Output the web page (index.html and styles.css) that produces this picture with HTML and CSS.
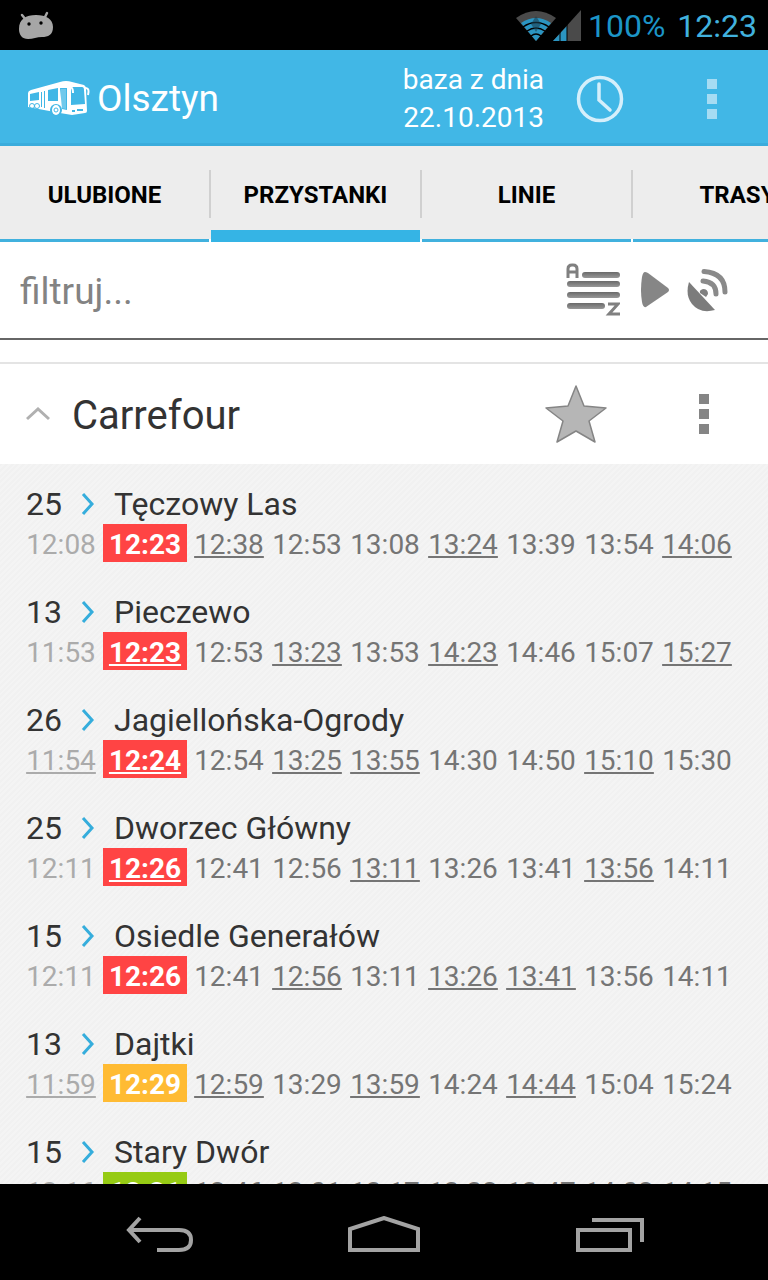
FILE: index.html
```
<!DOCTYPE html>
<html lang="pl">
<head>
    <meta charset="UTF-8">
    <meta name="viewport" content="width=device-width, initial-scale=1.0">
    <title>Olsztyn</title>
    <link rel="stylesheet" href="styles.css">
</head>
<body>
    <div class="status-bar">
        <svg class="droid" width="36" height="30" viewBox="0 0 36 30">
            <path d="M4 4l4 5M29 2l-3 6" stroke="#a6a6a6" stroke-width="2.500" stroke-linecap="round"/>
            <path d="M1 18C1 8 8 4 18 4s17 4 17 12c0 8-5 10-11 10-5 0-9 2-14 2-6 0-9-4-9-10z" fill="#a6a6a6"/>
            <circle cx="11" cy="13" r="1.700" fill="#000"/>
            <circle cx="23" cy="12" r="1.700" fill="#000"/>
        </svg>
        <div class="signals">
            <svg width="66" height="34" viewBox="0 0 66 34">
                <path d="M0 9Q20-5 40 9L20 32z" fill="#4a4a4a"/>
                <path d="M5 14Q20 4 35 14L20 32z" fill="#2b95c2"/>
                <path d="M7 18Q20 9 33 18M11 22Q20 16 29 22M15 27Q20 23 25 27" fill="none" stroke="#000" stroke-width="1.500"/>
                <path d="M15 15l5-8 5 8-5 8z" fill="#1b3f50" opacity=".6"/>
                <path d="M37 32L65 1v31z" fill="#4a4a4a"/>
                <path d="M37 32L51 17v15z" fill="#2b95c2"/>
                <path d="M44 20v12M51 13v19" stroke="#000" stroke-width="1"/>
            </svg>
            <span class="battery">100%</span>
            <span class="clock">12:23</span>
        </div>
    </div>

    <header class="app-bar">
        <svg class="bus" width="62" height="36" viewBox="0 0 62 36">
            <path d="M0 12Q0 10 3 9L32 1Q38-1 44 1l12 3q2 1 2 4l1 22q0 2-2 2l-13 2-12-2L0 26z" fill="#fff"/>
            <g fill="#41b7e6">
                <path d="M2 13l9-2v8l-9 1zM20 9l10-2v13H20zM32 7l7 0v22l-5-1zM43 6l11 0q2 0 2 3l1 14-14 1z"/>
                <path d="M13 11h1v15h-1zM16 10h1v17h-1z"/>
                <path d="M44 29h3v2h-3zM49 28h6v2h-6z"/>
            </g>
            <path d="M33 8v19l5 1V8z" fill="#fff" opacity=".25"/>
            <circle cx="28" cy="29" r="6" fill="#41b7e6"/>
            <ellipse cx="28" cy="29" rx="4" ry="5" fill="#fff"/>
            <circle cx="28" cy="29" r="2" fill="none" stroke="#41b7e6"/>
            <circle cx="4" cy="25" r="2.500" fill="none" stroke="#41b7e6"/>
            <circle cx="9" cy="25" r="2.500" fill="none" stroke="#41b7e6"/>
            <path d="M42 6q3 0 3 6M57 7c4 0 4 3 3 7" fill="none" stroke="#fff" stroke-width="2"/>
        </svg>
        <h1>Olsztyn</h1>
        <p class="base-date">baza z dnia<br>22.10.2013</p>
        <button class="clock-button" aria-label="Godzina">
            <svg width="48" height="48" viewBox="0 0 48 48">
                <circle cx="24" cy="24" r="21.500" fill="none" stroke="#d5effb" stroke-width="3.500"/>
                <path d="M23 9v16l11 10" fill="none" stroke="#d5effb" stroke-width="3.500" stroke-linecap="round"/>
            </svg>
        </button>
        <button class="more more-light" aria-label="Menu"><i></i><i></i><i></i></button>
    </header>

    <nav class="tabs">
        <a class="tab" href="#">ULUBIONE</a>
        <a class="tab active" href="#">PRZYSTANKI</a>
        <a class="tab" href="#">LINIE</a>
        <a class="tab" href="#">TRASY</a>
    </nav>

    <form class="filter">
        <input type="text" placeholder="filtruj..." aria-label="filtruj">
        <button type="button" class="sort" aria-label="Sortuj">
            <svg width="54" height="54" viewBox="0 0 54 54">
                <defs>
                    <linearGradient id="bar" x1="0" y1="0" x2="0" y2="1">
                        <stop offset="0" stop-color="#6a6a6a"/>
                        <stop offset="1" stop-color="#989898"/>
                    </linearGradient>
                </defs>
                <g fill="url(#bar)">
                    <rect x="16" y="9" width="38" height="6" rx="3"/>
                    <rect x="1" y="18" width="53" height="6" rx="3"/>
                    <rect x="1" y="29" width="53" height="6" rx="3"/>
                    <rect x="1" y="40" width="38" height="6" rx="3"/>
                </g>
                <path d="M2 15V6q0-4 4-4h1q4 0 4 4v9M2 9h9M42 41h10l-9 10h11" fill="none" stroke="#808080" stroke-width="3"/>
            </svg>
        </button>
        <button type="button" class="play" aria-label="Dalej">
            <svg width="30" height="38" viewBox="0 0 30 38">
                <path d="M5 1Q3 1 2 6Q0 19 2 31Q3 37 6 36L28 21q2-2 0-4L8 2Q6 1 5 1z" fill="#868686"/>
            </svg>
        </button>
        <button type="button" class="gps" aria-label="Lokalizacja">
            <svg width="44" height="44" viewBox="0 0 44 44">
                <path d="M3 14L29 42Q14 46 6 36Q-1 27 3 14z" fill="#7c7c7c"/>
                <path d="M14 25q-1-3 3-4 5 0 5 5l-2 3z" fill="#808080"/>
                <path d="M17 13Q30 14 30 26M18 3.500Q39 5 39 24" fill="none" stroke="#8a8a8a" stroke-width="5" stroke-linecap="round"/>
            </svg>
        </button>
    </form>

    <main class="stops">
        <div class="stop-header">
            <svg class="collapse" width="24" height="14" viewBox="0 0 24 14">
                <path d="M1 12L12 2l11 10" fill="none" stroke="#b0b0b0" stroke-width="3"/>
            </svg>
            <h2>Carrefour</h2>
            <button class="star" aria-label="Dodaj do ulubionych">
                <svg width="64" height="60" viewBox="0 0 64 60">
                    <path d="M32 2l8 20 22 2-17 13 6 21-19-11-19 11 6-21L2 24l22-2z" fill="#b6b6b6" stroke="#858585" stroke-width="1.500" stroke-linejoin="round"/>
                </svg>
            </button>
            <button class="more" aria-label="Opcje"><i></i><i></i><i></i></button>
        </div>

        <ul class="departures">
            <li>
                <div class="line"><b>25</b><svg class="arrow" width="14" height="24" viewBox="0 0 14 24"><path d="M2 2l9 10-9 10"/></svg><span>Tęczowy Las</span></div>
                <div class="times"><time class="past">12:08</time><time class="next red">12:23</time><time class="low">12:38</time><time>12:53</time><time>13:08</time><time class="low">13:24</time><time>13:39</time><time>13:54</time><time class="low">14:06</time></div>
            </li>
            <li>
                <div class="line"><b>13</b><svg class="arrow" width="14" height="24" viewBox="0 0 14 24"><path d="M2 2l9 10-9 10"/></svg><span>Pieczewo</span></div>
                <div class="times"><time class="past">11:53</time><time class="next red low">12:23</time><time>12:53</time><time class="low">13:23</time><time>13:53</time><time class="low">14:23</time><time>14:46</time><time>15:07</time><time class="low">15:27</time></div>
            </li>
            <li>
                <div class="line"><b>26</b><svg class="arrow" width="14" height="24" viewBox="0 0 14 24"><path d="M2 2l9 10-9 10"/></svg><span>Jagiellońska-Ogrody</span></div>
                <div class="times"><time class="past low">11:54</time><time class="next red low">12:24</time><time>12:54</time><time class="low">13:25</time><time class="low">13:55</time><time>14:30</time><time>14:50</time><time class="low">15:10</time><time>15:30</time></div>
            </li>
            <li>
                <div class="line"><b>25</b><svg class="arrow" width="14" height="24" viewBox="0 0 14 24"><path d="M2 2l9 10-9 10"/></svg><span>Dworzec Główny</span></div>
                <div class="times"><time class="past">12:11</time><time class="next red low">12:26</time><time>12:41</time><time>12:56</time><time class="low">13:11</time><time>13:26</time><time>13:41</time><time class="low">13:56</time><time>14:11</time></div>
            </li>
            <li>
                <div class="line"><b>15</b><svg class="arrow" width="14" height="24" viewBox="0 0 14 24"><path d="M2 2l9 10-9 10"/></svg><span>Osiedle Generałów</span></div>
                <div class="times"><time class="past">12:11</time><time class="next red">12:26</time><time>12:41</time><time class="low">12:56</time><time>13:11</time><time class="low">13:26</time><time class="low">13:41</time><time>13:56</time><time>14:11</time></div>
            </li>
            <li>
                <div class="line"><b>13</b><svg class="arrow" width="14" height="24" viewBox="0 0 14 24"><path d="M2 2l9 10-9 10"/></svg><span>Dajtki</span></div>
                <div class="times"><time class="past low">11:59</time><time class="next orange">12:29</time><time class="low">12:59</time><time>13:29</time><time class="low">13:59</time><time>14:24</time><time class="low">14:44</time><time>15:04</time><time>15:24</time></div>
            </li>
            <li>
                <div class="line"><b>15</b><svg class="arrow" width="14" height="24" viewBox="0 0 14 24"><path d="M2 2l9 10-9 10"/></svg><span>Stary Dwór</span></div>
                <div class="times"><time class="past">12:16</time><time class="next green">12:31</time><time>12:46</time><time>13:01</time><time>13:17</time><time>13:32</time><time>13:47</time><time>14:02</time><time>14:15</time></div>
            </li>
        </ul>
    </main>

    <footer class="nav-bar">
        <button aria-label="Wstecz">
            <svg width="72" height="40" viewBox="0 0 72 40">
                <path d="M17 2L6 14l11 12M6 14h50q12 0 12 10t-12 10H34" fill="none" stroke="#a3a3a3" stroke-width="4"/>
            </svg>
        </button>
        <button aria-label="Ekran główny">
            <svg width="72" height="40" viewBox="0 0 72 40">
                <path d="M2 34V13L36 2l34 11v21z" fill="none" stroke="#a3a3a3" stroke-width="4"/>
            </svg>
        </button>
        <button aria-label="Ostatnie aplikacje">
            <svg width="72" height="40" viewBox="0 0 72 40">
                <path d="M5 14h52v20H5zM19 4h50v22" fill="none" stroke="#a3a3a3" stroke-width="4"/>
            </svg>
        </button>
    </footer>
</body>
</html>
```
FILE: styles.css
```
* {
    margin: 0;
    padding: 0;
    box-sizing: border-box;
}

body {
    height: 100vh;
    display: flex;
    flex-direction: column;
    overflow: hidden;
    font-family: Roboto, "Liberation Sans", sans-serif;
    background-color: #fff;
    color: #333;
}

svg {
    display: block;
    flex: none;
}

button {
    display: flex;
    align-items: center;
    justify-content: center;
    flex: none;
    border: none;
    background: none;
    cursor: pointer;
}

/* Status bar */
.status-bar {
    display: flex;
    flex: none;
    align-items: center;
    justify-content: space-between;
    height: 50px;
    padding: 2px 11px 0 18px;
    background-color: #000;
    font-size: 32px;
}

.signals {
    display: flex;
    align-items: center;
}

.battery {
    margin: 0 12px 0 6px;
    color: #1c95c7;
}

.clock {
    color: #41b1de;
}

/* App bar */
.app-bar {
    display: flex;
    flex: none;
    align-items: center;
    height: 96px;
    padding: 4px 0 0 28px;
    background-color: #41b7e6;
    border-bottom: 3px solid #3aacdc;
    color: #fff;
}

.app-bar h1 {
    margin-left: 7px;
    font-size: 37px;
    font-weight: 400;
}

.base-date {
    margin-left: auto;
    font-size: 28px;
    line-height: 38px;
    text-align: right;
}

.clock-button {
    width: 112px;
    height: 90px;
}

.more {
    flex-direction: column;
    gap: 5px;
    width: 112px;
    height: 90px;
}

.more i {
    width: 10px;
    height: 10px;
    background-color: #858585;
}

.more-light i {
    background-color: #a6dcf3;
}

/* Tabs */
.tabs {
    display: flex;
    flex: none;
    height: 96px;
    overflow: hidden;
    background: linear-gradient(#ededed 0 93px, #fff 93px);
}

.tab {
    position: relative;
    flex: 0 0 209px;
    margin-right: 2px;
    border-bottom: 3px solid #41b1de;
    background-color: #ededed;
    color: #000;
    font-size: 24px;
    font-weight: 700;
    line-height: 98px;
    text-align: center;
    text-decoration: none;
}

.tab::after {
    content: "";
    position: absolute;
    top: 24px;
    right: -2px;
    width: 2px;
    height: 48px;
    background-color: #d0d0d0;
}

.tab.active {
    border-bottom: 12px solid #35b4e5;
}

/* Filter */
.filter {
    display: flex;
    flex: none;
    align-items: center;
    height: 98px;
    padding: 0 38px 0 20px;
    border-bottom: 2px solid #666;
}

.filter input {
    flex: 1;
    min-width: 0;
    padding-top: 3px;
    border: none;
    outline: none;
    background: none;
    color: #333;
    font-family: inherit;
    font-size: 37px;
}

.filter input::placeholder {
    color: #838383;
}

.play {
    margin: 0 16px 0 20px;
}

/* Stops */
.stops {
    flex: 1;
    min-height: 0;
    margin-top: 22px;
    border-top: 2px solid #e4e4e4;
    overflow: hidden;
}

.stop-header {
    display: flex;
    align-items: center;
    height: 100px;
    padding: 0 8px 0 26px;
}

.stop-header h2 {
    flex: 1;
    margin-left: 22px;
    padding-top: 3px;
    font-size: 40px;
    font-weight: 400;
}

.star {
    margin-right: 40px;
}

.departures {
    list-style: none;
    background: repeating-linear-gradient(135deg, #f1f1f1 0 2px, #f4f4f4 2px 4px);
}

.departures li {
    padding: 20px 25px 10px;
}

.line {
    display: flex;
    align-items: center;
    height: 40px;
    font-size: 32px;
}

.line b {
    width: 56px;
    padding-left: 1px;
    font-weight: 400;
}

.arrow {
    margin-right: 19px;
    fill: none;
    stroke: #35addc;
    stroke-width: 3px;
}

.times {
    display: flex;
    gap: 6px;
    color: #757575;
    font-size: 28px;
    line-height: 34px;
    text-align: center;
}

.times time {
    flex: 0 0 72px;
    padding-top: 4px;
}

.times .past {
    color: #ababab;
}

.times .low {
    text-decoration: underline;
    text-decoration-thickness: 2px;
    text-underline-offset: 2px;
}

.times .next {
    flex-basis: 84px;
    color: #fff;
    font-weight: 700;
}

.red {
    background-color: #ff4444;
}

.orange {
    background-color: #ffbb33;
}

.green {
    background-color: #96cb14;
}

/* Navigation bar */
.nav-bar {
    display: flex;
    flex: none;
    justify-content: center;
    gap: 40px;
    height: 96px;
    background-color: #000;
}

.nav-bar button {
    width: 185px;
    padding-top: 8px;
}
```
